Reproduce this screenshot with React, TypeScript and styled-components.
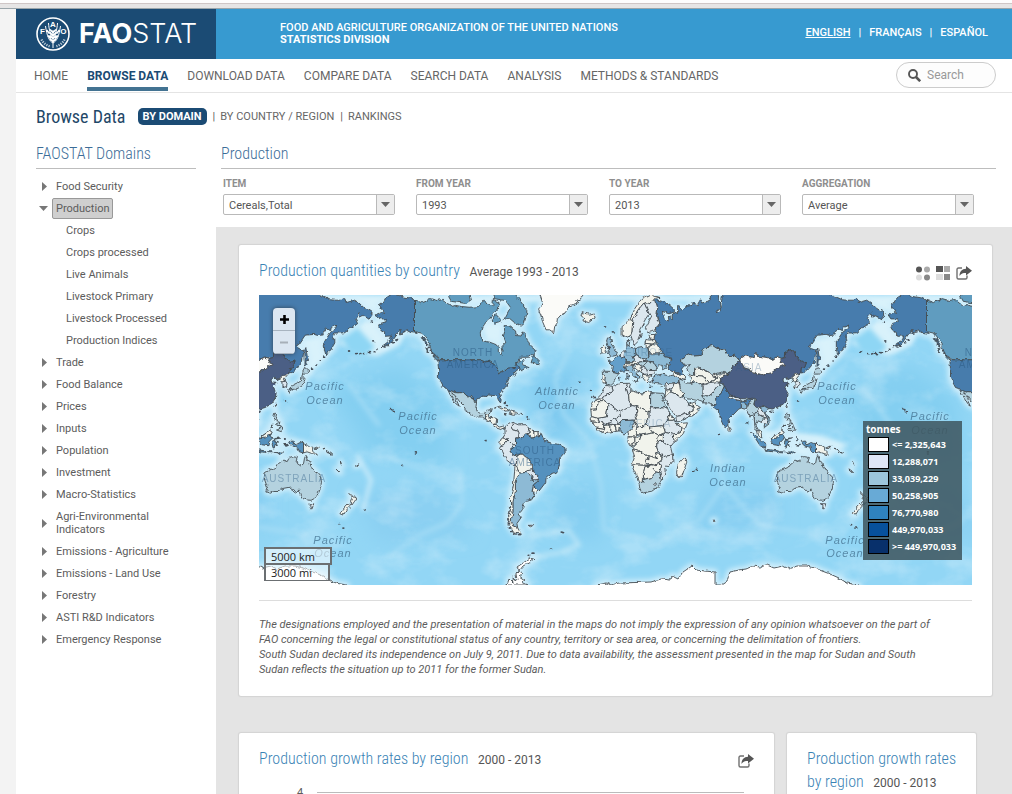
import React from 'react';
import styled, { createGlobalStyle } from 'styled-components';

const condensed = '"Roboto Condensed", "Liberation Sans Narrow", Roboto, sans-serif';
const sans = 'Roboto, "Liberation Sans", sans-serif';

const GlobalStyle = createGlobalStyle`
  * { box-sizing: border-box; }
  body { margin: 0; background: #f3f3f3; font-family: ${sans}; color: #5c5c5c; }
  ul { list-style: none; margin: 0; padding: 0; }
  a { color: inherit; text-decoration: none; }
  button, select, input { font-family: inherit; color: inherit; }
`;

/* ---------- page frame ---------- */

const WindowEdge = styled.div`
  height: 9px;
  border-top: 3px solid #fdfdfd;
  border-bottom: 1px solid #9aa5aa;
  background: #e6e5e5;
  box-shadow: inset 0 1px 0 #cfc6c6;
`;
const Page = styled.div`
  margin-left: 16px;
  background: #fff;
`;
const Header = styled.header`
  display: flex;
  height: 50px;
  background: #379ad0;
  color: #fff;
`;
const Brand = styled.a`
  display: flex;
  align-items: center;
  gap: 9px;
  width: 200px;
  padding-left: 20px;
  background: #1b4b74;
`;
const BrandName = styled.span`
  font: 300 27px/48px Inter, Roboto, sans-serif;
  color: #fff;
  b { font-weight: 700; }
`;
const Org = styled.p`
  flex: 1;
  margin: 0;
  padding: 13px 0 0 64px;
  font-size: 11px;
  line-height: 12px;
  font-weight: 500;
  b { display: block; font-weight: 700; }
`;
const Languages = styled.nav`
  display: flex;
  gap: 8px;
  padding: 17px 24px 0 0;
  font-size: 11px;
  line-height: 13px;
  font-weight: 500;
`;
const Language = styled.a<{ $current?: boolean }>`
  text-decoration: ${p => (p.$current ? 'underline' : 'none')};
`;

const MenuBar = styled.div`
  display: flex;
  justify-content: space-between;
  height: 34px;
  padding: 0 16px 0 18px;
  border-bottom: 1px solid #e4e4e4;
`;
const Menu = styled.nav`
  display: flex;
  gap: 19px;
`;
const MenuLink = styled.a<{ $active?: boolean }>`
  height: 32px;
  font-size: 12px;
  line-height: 34px;
  white-space: nowrap;
  color: ${p => (p.$active ? '#1b4b74' : '#666')};
  font-weight: ${p => (p.$active ? 700 : 400)};
  border-bottom: 4px solid ${p => (p.$active ? '#437392' : 'transparent')};
`;
const SearchBox = styled.label`
  display: flex;
  align-items: center;
  gap: 6px;
  width: 100px;
  height: 26px;
  margin-top: 3px;
  padding: 0 10px 0 11px;
  border: 1px solid #ccc;
  border-radius: 13px;
  background: #fdfdfd;
`;
const SearchInput = styled.input`
  width: 58px;
  padding: 0;
  border: 0;
  outline: 0;
  background: none;
  font-size: 12px;
  &::placeholder { color: #999; opacity: 1; }
`;

const SubHeader = styled.div`
  display: flex;
  align-items: center;
  height: 46px;
  padding-left: 20px;
  font-size: 11px;
`;
const PageTitle = styled.h1`
  margin: 0 12px 0 0;
  padding-top: 2px;
  font: 400 18px/24px ${condensed};
  color: #1f4868;
`;
const ViewLink = styled.a<{ $active?: boolean }>`
  padding: ${p => (p.$active ? '2px 5px' : '0')};
  margin-right: 6px;
  border-radius: 5px;
  line-height: 13px;
  background: ${p => (p.$active ? '#1b4b74' : 'transparent')};
  color: ${p => (p.$active ? '#fff' : '#666')};
  font-weight: ${p => (p.$active ? 700 : 400)};
`;
const Divider = styled.span`
  margin-right: 5px;
`;

const Columns = styled.div`
  display: flex;
`;
const Sidebar = styled.aside`
  flex: 0 0 200px;
  padding: 0 20px;
`;
const SectionTitle = styled.h2`
  height: 30px;
  margin: 0;
  border-bottom: 1px solid #bdbdbd;
  font: 300 16px/30px ${condensed};
  color: #3c6d98;
`;
const Main = styled.main`
  flex: 1;
  min-width: 0;
`;

/* ---------- domain tree ---------- */

const Tree = styled.ul`
  padding-top: 6px;
`;
const TreeRow = styled.li<{ $child?: boolean }>`
  display: flex;
  align-items: center;
  padding: 5px 0 4px ${p => (p.$child ? '30px' : '2px')};
  font-size: 11px;
  line-height: 13px;
`;
const Toggle = styled.button<{ $open: boolean }>`
  flex: 0 0 18px;
  display: flex;
  align-items: center;
  height: 13px;
  padding: 0 0 0 ${p => (p.$open ? '1px' : '4px')};
  border: 0;
  background: none;
  color: #777;
`;
const TreeLink = styled.a<{ $selected?: boolean }>`
  ${p =>
    p.$selected &&
    `margin: -4px 0 -4px -4px;
     padding: 3px;
     border: 1px solid #999;
     border-radius: 2px;
     background: #cfcfcf;`}
`;

/* ---------- filters ---------- */

const MainHead = styled.div`
  padding: 0 16px 0 5px;
`;
const Filters = styled.form`
  display: grid;
  grid-template-columns: repeat(4, 1fr);
  gap: 21px;
  height: 58px;
  padding: 8px 38px 0 7px;
`;
const Field = styled.label`
  display: block;
  font-size: 10px;
  line-height: 14px;
  font-weight: 700;
  color: #8e8e8e;
`;
const SelectFrame = styled.span`
  display: flex;
  height: 21px;
  margin-top: 3px;
  position: relative;
`;
const Select = styled.select`
  appearance: none;
  width: 100%;
  padding: 1px 24px 0 5px;
  border: 1px solid #b9b9b9;
  border-radius: 2px;
  background: #fff;
  font-size: 11px;
  color: #555;
`;
const SelectArrow = styled.span`
  position: absolute;
  right: 1px;
  top: 1px;
  bottom: 1px;
  width: 18px;
  display: grid;
  place-items: center;
  border-left: 1px solid #b9b9b9;
  background: #ededed;
  color: #666;
  pointer-events: none;
`;

/* ---------- cards ---------- */

const Board = styled.div`
  padding: 18px 20px 40px 23px;
  background: #e4e4e4;
`;
const Card = styled.section<{ $narrow?: boolean }>`
  padding: 12px ${p => (p.$narrow ? '12px' : '20px')} 0 20px;
  border-radius: 2px;
  background: #fff;
  box-shadow: 0 0 1px 1px #d3d3d3;
`;
const CardRow = styled.div`
  display: grid;
  grid-template-columns: minmax(0, 1fr) 189px;
  gap: 13px;
  margin-top: 37px;
  padding-right: 16px;
`;
const CardHead = styled.div`
  display: flex;
  justify-content: space-between;
  align-items: flex-start;
`;
const CardTitle = styled.h3`
  margin: 0;
  padding-top: 2px;
  font: 300 16px/23px ${condensed};
  color: #3a83b5;
`;
const Period = styled.span`
  margin-left: 6px;
  font: 400 12px/23px ${sans};
  color: #555;
  white-space: nowrap;
`;
const Tools = styled.div`
  display: flex;
  align-items: center;
  gap: 5px;
  height: 32px;
`;
const ToolButton = styled.button`
  display: block;
  padding: 0;
  border: 0;
  background: none;
  line-height: 0;
`;
const Disclaimer = styled.div`
  margin-top: 15px;
  padding: 16px 28px 19px 0;
  border-top: 1px solid #ddd;
  font-size: 11px;
  line-height: 15px;
  font-style: italic;
  p { margin: 0; }
`;

/* ---------- map furniture ---------- */

const MapFrame = styled.div`
  position: relative;
  margin-top: 6px;
  svg.world { display: block; width: 100%; height: auto; }
`;
const ZoomControl = styled.div`
  position: absolute;
  left: 14px;
  top: 13px;
  width: 22px;
  border-radius: 4px;
  overflow: hidden;
  background: #dbe6f1;
  box-shadow: 0 0 4px #345;
`;
const ZoomButton = styled.button<{ $off?: boolean }>`
  display: grid;
  place-items: center;
  width: 22px;
  height: 23px;
  padding: 0;
  border: 0;
  border-bottom: 1px solid #a8b4c0;
  background: none;
  color: ${p => (p.$off ? '#a7afb8' : '#000')};
`;
const ScaleBar = styled.div`
  position: absolute;
  left: 5px;
  bottom: 4px;
  color: #222;
`;
const ScaleLine = styled.div<{ $w: number; $top?: boolean }>`
  width: ${p => p.$w}px;
  height: ${p => (p.$top ? '16px' : '18px')};
  padding-left: 5px;
  border: 2px solid #6b6f72;
  border-top-width: ${p => (p.$top ? '0' : '2px')};
  border-bottom-width: ${p => (p.$top ? '1px' : '2px')};
  background: rgba(255, 255, 255, 0.55);
  font: 11px/15px "Open Sans", sans-serif;
`;
const Legend = styled.div`
  position: absolute;
  right: 10px;
  bottom: 25px;
  width: 99px;
  padding: 1px 3px 5px;
  background: rgba(63, 87, 96, 0.87);
  font: 700 9px/17px "Open Sans", sans-serif;
  color: #fff;
`;
const LegendTitle = styled.div`
  font: 700 10px/14px "Open Sans", sans-serif;
`;
const LegendRow = styled.li`
  display: flex;
  align-items: center;
  gap: 3px;
  height: 17px;
  padding-left: 2px;
  white-space: nowrap;
`;
const Swatch = styled.span<{ $c: string }>`
  width: 21px;
  height: 15px;
  border: 1px solid #000;
  background: ${p => p.$c};
`;
const ChartArea = styled.div`
  display: flex;
  height: 200px;
  padding: 10px 10px 0 38px;
  gap: 14px;
  font-size: 11px;
  line-height: 12px;
`;
const GridLine = styled.span`
  flex: 1;
  margin-top: 5px;
  border-top: 1px solid #bbb;
`;

/* ---------- world map ---------- */

// Web Mercator at zoom 1: 512px for the whole globe.
const WORLD = 512;
const K = WORLD / (2 * Math.PI);
const px = (lon: number) => 356 + (lon * WORLD) / 360;
const py = (lat: number) => 145 - K * Math.log(Math.tan(Math.PI / 4 + (lat * Math.PI) / 360));

const outline = (pts: string) =>
  'M' +
  pts
    .trim()
    .split(/\s+/)
    .map(p => {
      const [lon, lat] = p.split(',').map(Number);
      return `${px(lon).toFixed(1)} ${py(lat).toFixed(1)}`;
    })
    .join('L') +
  'Z';

const C = {
  russia: '#467cad',
  usa: '#467cac',
  china: '#4b5f85',
  india: '#4a80b3',
  canada: '#609cbf',
  brazil: '#5591be',
  france: '#649fca',
  mid: '#8dbad5',
  soft: '#b4d2df',
  pale: '#dce7ee',
  cream: '#f1f3ec',
  white: '#fbfbf8',
};

const countries: [string, string][] = [
  [C.russia, '28,70 31,69.5 36,69 41,67.5 41,66.4 38,66 33,66.7 35,64.3 38,63.9 37.5,65.1 40.5,64.6 40,65.6 42,66.5 44,66.1 44,68.3 46,68 46,66.8 48,67.6 54,68.4 54,69 58,68.5 60,69.7 61,68.9 65,69.3 67,69.7 67,71 68,73 73,73 72.5,71 74,68 71,66.3 74,66.8 76,72 128,72 130,71 133,71.6 140,72.5 150,71.3 152,70.9 160,69.7 163,69.6 168,69.6 170,70 171,69 177,69.6 180,68.9 184,67.5 188,66.6 190,66.1 187,64.4 183,65.5 180.5,65 180,66.3 178.7,65.6 177.5,64.6 179,63 177,62.5 174,61.7 170,60 166,59.9 163,59.9 161.5,58 163,57.5 163,56.2 161.8,55 160,53.2 158.5,52.8 156.8,51 155.7,53.5 155.6,56.5 157,57.8 159.8,60 163.5,61.5 164.3,62.6 160.5,61.8 160,60.7 156.7,61.5 154.3,59.7 155,59.2 151,59 148.5,59.4 142.2,59.1 137.5,55.5 135.2,54.8 138,53.9 141.2,53.2 140.6,50 140.3,48.3 138.2,46.3 135.3,43.9 133,42.8 131,42.6 130.6,42.4 131,44.8 133.2,45.1 135,48.4 131,47.7 130.5,48.9 127.5,49.8 126,52.8 123.5,53.5 120,52.6 119.8,50 117,49.7 114,50.2 110,49.2 107,50 102.2,50.5 98.5,52 98,50 94,50.4 92,50.8 87.7,49.2 83.5,51 80,50.8 77,53.4 74,53.6 71,54.2 68.5,55.2 65,54.4 61,53.9 61.5,51 58.5,51 55,50.7 51.5,51.6 48.5,50.4 46.9,49 47,48 49,46.3 48,45.5 47,44.8 47.6,43 48.5,41.8 46.5,41.9 44,42.6 40,43.5 37.4,44.8 37.7,46.7 39,47.2 38.2,47.8 40,48.8 39.7,49.8 35.5,50.4 34,52 31.5,53.2 32,54 30.8,54.9 28.2,56.2 27.5,57.5 28,59.4 30,60 28,60.6 31.5,62.9 29.5,66 30,67.7 28.5,68.2'],
  [C.russia, '142.5,54.3 143.5,50.5 144.5,49 143,49.2 142.6,47.5 143.5,46.7 142,46 142,50 141.8,53'],
  [C.usa, '-141,69.6 -141,60.3 -139,59.8 -143.5,60 -147,61 -149.5,59.8 -151.5,59.2 -150.5,61.2 -154,59.2 -158.3,56 -163,54.8 -164.5,54.6 -161,56 -157.7,57.6 -157,58.8 -162,58.7 -162,60 -164.5,60.7 -166,61.7 -164.8,63.1 -161,63.6 -161,64.5 -166,64.5 -168,65.7 -164,66.4 -162,66.1 -163.7,67.1 -166.3,68.3 -163,69.1 -161,70.3 -156.5,71.3 -150,70.5 -143.5,70.1'],
  [C.canada, '-141,69.6 -136,69 -133,69.4 -130,70 -125,69.5 -121,69.8 -115,68 -112,68.3 -108,68 -102,67.8 -96,68 -94,69 -92,69.6 -90,68.6 -86,68 -85.5,69.8 -81.5,69 -82,67.5 -86,66.3 -88,64.5 -90.5,63.6 -93.5,61.8 -94.7,60 -94.5,58.7 -92.5,57 -88,56.5 -82.3,55.2 -82,53 -79.5,51.3 -78.7,52.5 -79.5,54.7 -76.7,56.5 -78.5,58.8 -77.5,60.5 -78,62.4 -74,62.3 -70,61 -69.5,59 -66,58.8 -64.5,60.3 -62,57.8 -60,55.2 -56.5,53.5 -55.8,52.3 -60,50.2 -66.5,50.2 -70,47.3 -65,49.2 -64.5,48 -65,46.3 -61,45.5 -65.5,43.6 -67,45 -69,47.4 -71,45.3 -75,45 -79,43.4 -82.5,42 -82.5,45.3 -84.5,46.5 -88.5,48.3 -91.5,48.1 -95,49 -123,49 -124.5,50 -127.5,51 -130,54.5 -130,56 -133.5,58.5 -135.5,59.8 -139,60.2 -141,60.3'],
  [C.canada, '-59,47.7 -57,51.3 -55.8,49.8 -53,48 -53.5,46.7 -56,47'],
  [C.canada, '-62,66 -64,63 -66,62.2 -71,63.5 -74,64.6 -78,64.4 -73.5,67.8 -77,69.5 -85,70 -85,72 -74,72 -68,70 -62,67.2'],
  [C.canada, '-105,68.8 -115,69.3 -117,70.5 -112,72 -103,72 -101,69.7'],
  [C.canada, '-80,63.8 -85,63.2 -87,64 -84,66 -81,64.6'],
  [C.canada, '-124,48.5 -125.5,48.9 -128,50.6 -125.5,50.2'],
  [C.canada, '-131.8,52.2 -133,53.9 -131.8,54'],
  [C.usa, '-132,54.9 -133.2,55.8 -134,57 -136.3,58.2 -134.6,58.2 -133.5,57.2 -131.5,55.6'],
  [C.usa, '-152.5,57.7 -154.5,57.3 -153.6,56.9'],
  [C.usa, '-123,49 -95,49 -91.5,48 -88.5,48.3 -84.5,46.5 -82.5,45.3 -82.5,42 -79,43.2 -75,45 -71,45.3 -69,47.4 -67,45 -70.5,43 -70,41.7 -74,40.6 -76,37 -75.5,35.3 -79,33.5 -81.3,31 -80,27 -80.5,25.2 -82,27 -83,29.5 -85,29.8 -89.5,30.2 -90,29.2 -94,29.6 -97.3,27.5 -97.3,25.9 -99.3,26.8 -101.5,29.7 -103,29 -104.8,30 -106.5,31.7 -111,31.4 -114.8,32.5 -117.1,32.5 -118.5,34 -120.6,34.6 -122.5,37.5 -124.2,40.3 -124,44 -124.5,48.3'],
  [C.soft, '-117.1,32.5 -114.8,32.5 -111,31.4 -106.5,31.7 -104.8,30 -103,29 -101.5,29.7 -99.3,26.8 -97.3,25.9 -97.8,22.3 -96.2,19.2 -94.4,18.2 -91.5,18.5 -90.4,21 -87,21.5 -88,18.4 -91,17.5 -90.5,16 -92.2,14.6 -94,16.1 -97,15.9 -101.5,17.7 -105.5,20.4 -105.5,22.5 -109,25.8 -112.5,29.8 -114.7,31.7 -112,28 -109.5,23.1 -112,24.8 -114,28 -116,30.3'],
  [C.cream, '-92.2,14.6 -90.5,16 -91,17.5 -88,18.4 -88.5,15.9 -87.5,12.9'],
  [C.cream, '-88.5,15.9 -83.2,15 -83.7,11 -85.8,11 -87.5,12.9'],
  [C.cream, '-83.7,11 -81.5,9 -79,9.5 -77.4,8.5 -80,7.3 -83,8.3 -85.8,10.2'],
  [C.cream, '-84.8,21.9 -81,23.1 -77,21.7 -74.2,20.2 -77.5,19.9 -78,20.7 -82,22.4'],
  [C.cream, '-74.4,18.5 -73,19.9 -69,19 -68.5,18.2 -71.5,17.8'],
  [C.cream, '-78,18.4 -76.3,18.2 -77.2,17.8'],
  [C.cream, '-67,18.4 -65.7,18.4 -66,18'],
  [C.pale, '-77.4,8.5 -75,10.8 -71.5,12.3 -73,9.2 -72,7.2 -67.5,6.2 -67.2,1.5 -69.8,1.5 -70,-4.2 -73,-2.3 -75.3,0 -78.8,1.5 -77.3,4'],
  [C.pale, '-71.5,12.3 -70,11.5 -68,10.6 -62,10.7 -60,8.3 -61,6 -60.5,4.7 -64,4 -65.5,.8 -67.2,1.5 -67.5,6.2 -72,7.2 -73,9.2'],
  [C.cream, '-60,8.3 -57,6 -57,2 -58.8,1.2 -60.5,4.7'],
  [C.cream, '-57,6 -54,5.9 -54,2.3 -57,2'],
  [C.cream, '-54,5.9 -51.7,4.2 -54,2.3'],
  [C.cream, '-78.8,1.5 -75.3,0 -78,-3 -80.2,-4.3 -81,-2 -80,.8'],
  [C.pale, '-80.2,-4.3 -78,-3 -75.3,0 -73,-2.3 -70,-4.2 -74,-7.5 -72.5,-9.5 -70.5,-11 -69,-12.5 -69,-16 -70.3,-18.3 -76.2,-14 -79,-8 -81.2,-6'],
  [C.brazil, '-70,-4.2 -69.8,1.5 -67.2,1.5 -65.5,.8 -64,4 -60.5,4.7 -58.8,1.2 -54,2.3 -51.7,4.2 -50,0 -44,-2.5 -40,-2.9 -35.2,-5.5 -35,-9 -39,-13.5 -39.3,-18 -41,-22 -45,-23.4 -48.5,-26 -48.7,-28.5 -53.4,-33.7 -57.6,-30.2 -53.7,-27.1 -54.6,-25.5 -54.3,-24.2 -57.8,-22.1 -58,-17 -60,-16.3 -60,-13.7 -65.3,-9.8 -70.5,-11 -72.5,-9.5 -74,-7.5'],
  [C.cream, '-69,-11 -65.3,-9.8 -60,-13.7 -60,-16.3 -58,-17 -57.8,-20 -62,-20.5 -62.6,-22.2 -67.5,-22.8 -69.5,-17.5 -69,-12.5'],
  [C.pale, '-62.6,-22.2 -62,-20.5 -58.2,-19.8 -57.8,-22.1 -54.3,-24.2 -54.7,-26.8 -58.5,-27.3 -57.7,-25.2'],
  [C.cream, '-57.6,-30.2 -53.4,-33.7 -55,-34.9 -58.2,-34'],
  [C.mid, '-67.5,-22.8 -62.6,-22.2 -57.7,-25.2 -58.5,-27.3 -54.7,-26.8 -53.7,-27.1 -57.6,-30.2 -58.3,-34 -57,-36.3 -58,-38.3 -62.2,-39 -65,-41 -63.8,-42.5 -67.5,-46 -65.8,-47.6 -69,-50.5 -68.4,-52.4 -72,-51.5 -73,-49 -71.8,-45 -71.8,-40 -70,-34 -70,-29 -68.5,-25'],
  [C.cream, '-70.3,-18.3 -69.5,-17.5 -67.5,-22.8 -68.5,-25 -70,-29 -70,-34 -71.8,-40 -71.8,-45 -73,-49 -72,-51.5 -68.4,-52.4 -66,-55 -71,-54.5 -75,-51 -75.5,-47 -73.5,-42 -73.5,-37 -71.5,-31'],
  [C.white, '-43,60 -46,61 -48.5,61 -51,63.7 -52,65.4 -53.7,67 -51,69 -54,72 -22,72 -23,70.3 -27,69.5 -25.5,69 -32,68.2 -35,66.3 -38,65.7 -40.5,64.5 -41,63 -42.5,62'],
  [C.cream, '-24,65.5 -22,64.8 -22.5,63.9 -18.5,63.4 -14,64.8 -15,66.2 -18,65.9 -20,66 -23,66.4'],
  [C.mid, '-5.5,50.1 1,51 1.6,52.8 0,53.3 -1.5,54.9 -3,56 -2,57.5 -4,57.7 -3,58.6 -5,58.6 -6,56.8 -5,55 -3,54 -4.7,53.2 -5,51.8 -3,51.3'],
  [C.cream, '-10,52 -6.3,52.2 -6,54.5 -8,55.2 -10,54'],
  [C.cream, '5,59 5,62 8,63.5 10,64 12,65.5 14,67.5 16,68.6 19,70 25,71 31,70.3 28,70 25,68.7 20.5,69 16,67 12.5,64 12,60.5 11,59 7.5,58.1'],
  [C.pale, '11,59 12,60.5 12.5,64 16,67 20.5,69 24,66 21.5,64.5 17.3,61 18.5,59.8 16.5,57 14,55.5 13,55.5'],
  [C.pale, '20.5,69 25,68.7 28,70 30,67.7 29.5,66 31.5,62.9 28,60.6 23,60 21.4,61.5 25.3,65 24,66'],
  [C.soft, '8.2,55 8.2,57 10.5,57.6 10,55'],
  [C.cream, '24,59.3 28,59.4 27.5,57.5 24.3,57.7'],
  [C.cream, '24.3,57.3 27.5,57.5 28.2,56.2 26,55.7 21.1,56 21.7,57.5'],
  [C.cream, '21.1,56 26,55.7 23.5,54 21,55.2'],
  [C.cream, '23.5,54 26,55.7 30.8,54.9 32,54 31.5,53.2 31,51.6 23.6,51.6'],
  [C.mid, '14.3,53.9 19,54.4 23,54.3 23.6,51.6 24,50.5 22.5,49.2 18.5,49.6 14.8,51'],
  [C.mid, '7,53.5 9,54.8 14.3,53.9 14.8,51 12.2,50.3 13.5,48.7 12.9,47.6 7.6,47.6 8.2,49 6.2,49.7'],
  [C.pale, '2.5,51 7,53.5 6.2,49.7'],
  [C.france, '-1.8,43.4 -1.2,46 -4.7,48.3 -1.5,48.7 2.5,51 6.2,49.7 8.2,49 7.6,47.6 6.2,46.3 7.6,43.8 4,43.4 3.1,42.5'],
  [C.soft, '-9,43.5 -1.8,43.4 3.1,42.5 0,40 -.5,38 -2.2,36.8 -5.5,36.1 -7.3,37.2 -7,41.8 -8.8,42'],
  [C.cream, '-8.8,42 -6.7,41.8 -7.3,37.2 -9,37.1 -9.4,38.8'],
  [C.mid, '7.6,43.8 6.9,45.2 10.5,46.7 13.6,46.4 12.4,44.5 16,41.5 18.4,40 16.6,39.8 16,38 15.5,40 12.3,41.8 10.3,43.8'],
  [C.mid, '12.5,38 15.5,38.2 15,36.8'],
  [C.mid, '8.3,39 8.4,41 9.7,41 9.5,39.2'],
  [C.cream, '6.2,46.3 7.6,47.6 12.9,47.6 13.5,48.7 17,48.4 16.2,46.9 10.5,46.7 6.9,45.9'],
  [C.pale, '12.2,50.3 14.8,51 18.5,49.6 22.5,49.2 22,48.3 17,48 13.5,48.7'],
  [C.soft, '16.2,46.9 17,48 22,48.3 22.8,47.8 20.3,46.1 17,45.8'],
  [C.cream, '13.6,45.5 16.2,46.9 17,45.8 19,45.2 19.2,42.6 15,44.5'],
  [C.pale, '19,45.2 20.3,46.1 22.5,44.5 22.9,42 19.5,41.9'],
  [C.soft, '20.3,46.1 22.8,47.8 26.5,48.2 28.2,46.5 29.7,45 28.5,43.8 22.6,43.9'],
  [C.pale, '22.6,43.9 28.5,43.8 28,42 22.9,41.5'],
  [C.cream, '19.5,41.9 22.9,41.5 26.3,41.5 24,40.3 22.7,39 24,37.8 22.5,36.6 21,38.5 19.3,40.5'],
  [C.mid, '22.5,49.2 24,50.5 23.6,51.6 31,51.6 34,52 35.5,50.4 39.7,49.8 38.2,47.3 35,46.4 36.5,45.3 33.8,44.4 32.8,46 30.7,46.3 29.7,45.3 28.2,46.5 26.5,48.2 22,48.3'],
  [C.mid, '26.3,40.2 29,41.2 33,42 38,41 41.5,41.5 44.8,39.7 44.5,37.2 36.5,36.8 36,36 31,36.7 27.5,36.8'],
  [C.cream, '40,43.5 46.5,41.9 48.5,41.8 50,40.4 48.8,38.4 46.5,39 44.8,39.7 41.5,41.5'],
  [C.soft, '46.9,49 48.5,50.4 51.5,51.6 55,50.7 61.5,51 61,53.9 65,54.4 68.5,55.2 71,54.2 74,53.6 77,53.4 80,50.8 83.5,51 87.7,49.2 85.5,47.2 82.5,45.5 80.2,42.3 75,43 70.5,42 68,41.2 66,43 61,44.5 58.5,45.5 56,45 56,41.3 52.5,42 50.3,44.5 53,46.8 49,46.3 47,48'],
  [C.cream, '56,41.3 56,45 58.5,45.5 61,44.5 66,43 68,41.2 73,40.5 68,38.5 66.5,37.4 61.5,41'],
  [C.cream, '53.8,37 52.5,42 56,41.3 61.5,41 66.5,37.4 61.2,35.7 57,38.1'],
  [C.cream, '68,41.2 70.5,42 80.2,42.3 74,39.5 73,40.3'],
  [C.cream, '68,38.5 73,40.3 74,39.5 74.9,37.3 67.8,37.2'],
  [C.pale, '61.2,35.7 66.5,37.4 71.5,37.9 74.9,37.3 71,34 69.5,31.8 66,29.6 61,29.6'],
  [C.soft, '61,29.6 66,29.6 69.5,31.8 71,34 74.9,37 77,35.5 74.5,31 70,28 71,24.3 67.3,24 66.5,25.3 61.6,25.2 63,27.2'],
  [C.soft, '44.8,39.7 46.5,39 48.8,38.4 50,37.4 53.8,37 57,38.1 61.2,35.7 61,29.6 63,27.2 61.6,25.2 57,26.9 51.5,27.8 48.5,30 46,33 45.5,36'],
  [C.cream, '42.3,37.2 44.8,37.2 45.5,36 46,33 48.5,30 46.5,29.1 39.2,32 41,34.4'],
  [C.pale, '36,36.8 42.3,37.2 41,34.4 38.8,33.3 35.7,33'],
  [C.cream, '35.7,33 38.8,33.3 39.2,32 36,29.2 35,29.5'],
  [C.pale, '35,29.5 36,29.2 39.2,32 46.5,29.1 48.4,28.5 50,26.5 51.5,24.5 55,22.7 55,20 52,19 47,17 42.8,16.4 39,21.3 35,28'],
  [C.pale, '42.8,16.4 47,17 52,19 53,16.6 45,12.8 43.4,12.7'],
  [C.cream, '51.5,24.2 56,26 57,24 59.8,22.4 57.7,19 55,17 53,16.6 52,19 55,20 55,22.7'],
  [C.india, '77,35.5 79,32.5 81,30.2 80.2,28.8 84,27.4 88,26.5 92,26.9 97,28.2 95,26 93.3,24 92.3,22.5 91.5,24.5 89,26 88.8,22 87,21.2 82.3,16.6 80.2,15 80,12 78,8.2 76.5,9.5 74.7,13.5 72.8,19 72.7,21 70.5,20.8 69,22.3 71,24.3 70,28 74.5,31'],
  [C.pale, '80.2,28.8 81,30.2 88,27.9 88,26.5 84,27.4'],
  [C.mid, '88.5,26 92,25 92,21 89,21.8'],
  [C.cream, '80,9.7 81.8,7.5 80.2,6'],
  [C.china, '74,39.5 80.2,42.3 82.5,45.5 85.5,47.2 87.7,49.2 91,45.2 95.5,44.2 96.4,42.7 105,41.6 110,42.7 112,43.7 115.5,45.5 119.8,46.7 116,48 117,49.7 119.8,50 120,52.6 123.5,53.5 126,52.8 127.5,49.8 130.5,48.9 131,47.7 135,48.4 133.2,45.1 131,44.8 130.6,42.4 126.8,41.7 124.3,40 121.5,39 121,40.8 118,39 119,37.3 122.5,37 119.3,34.9 121.8,31.5 121,28 118.5,24.6 114,22.3 110.5,21.3 108,21.6 105,23.2 102,22.4 99.5,22.9 97.6,24.5 98.5,27.6 97,28.2 92,27.8 88,27.9 81,30.2 79,32.5 77,35.5 74.9,37.3'],
  [C.china, '108.8,19.8 110.7,20 110,18.4'],
  [C.white, '87.7,49.2 92,50.8 94,50.4 98,50 98.5,52 102.2,50.5 107,50 110,49.2 114,50.2 117,49.7 116,48 119.8,46.7 115.5,45.5 112,43.7 110,42.7 105,41.6 96.4,42.7 95.5,44.2 91,45.2'],
  [C.cream, '124.3,40 126.8,41.7 130.6,42.4 127.5,39.5 128.3,38.3 126.6,37.7 125,38'],
  [C.pale, '126.6,37.7 128.3,38.3 129.4,37 129,35.2 126.4,34.5'],
  [C.soft, '131,34 133,35.5 136.7,37 139.5,38.5 140,41.3 142,39.5 140.8,36 138.5,34.7 135.5,33.6'],
  [C.soft, '140,42 141.7,45.4 145.3,43.4 143,42'],
  [C.soft, '130,33.5 132,33.3 131,31.2 130,32'],
  [C.cream, '120.2,23 121.5,25.2 120.8,22'],
  [C.soft, '92.3,21 94.5,25 97,28 98.5,27.6 97.6,24.5 99.5,22.9 101,21.5 97.7,18.5 98.8,13 98.5,10 97.5,16.5 94.5,16'],
  [C.soft, '97.7,18.5 100,20.3 101,17.7 105.5,15.5 102.5,12.5 100.8,13.4 99.3,10 101,6.7 100,6.6 98.4,8 98.8,13'],
  [C.pale, '100,20.3 101,21.5 102,22.4 105,19 107.5,14.5 105.5,15.5 101,17.7'],
  [C.pale, '102.5,12.5 105.5,15.5 107.5,14.5 107,11.5 105,10.5'],
  [C.mid, '102,22.4 105,23.2 108,21.6 105.8,19 109,14 109,11.7 105,8.7 105,10.5 107,11.5 107.5,14.5 105,19'],
  [C.cream, '100.2,6.5 102,6.2 103.5,1.5 101,3'],
  [C.brazil, '95.3,5.5 98,4 103.5,-1 106,-3 105.8,-5.8 102,-4 98.5,1.5'],
  [C.brazil, '105.2,-6.8 108.5,-6.7 114.3,-7.7 114,-8.7 108,-7.8'],
  [C.brazil, '109,1.5 111.5,2.5 115,5 117,7 119,5.2 117.7,3 118.8,1 116.5,-1.5 116,-4 111.5,-3.3 110,-1.5'],
  [C.cream, '109,1.5 111.5,2.5 115,5 117,7 119,5.2 117.7,4 115.5,3.5 114.5,1.5 111,1'],
  [C.brazil, '120,1 125,1.5 120.5,0.5 121,-1 123.3,-1 121.7,-2 122.8,-4.5 121,-3 120.4,-5.6 119.5,-5.5 119,-3'],
  [C.brazil, '131,-1 134,-.8 135,-3.3 138,-1.7 141,-2.6 141,-9 138,-8.3 137,-5 133,-4 132,-2.8'],
  [C.cream, '141,-2.6 145,-4.3 147.8,-6.1 147,-6.8 150.8,-10.5 147,-9.5 143.5,-8.3 141,-9'],
  [C.brazil, '115.5,-8.2 119,-8.3 118.5,-9 115.5,-8.8'],
  [C.brazil, '120,-8.4 127,-8.4 124,-10.2 123,-9'],
  [C.brazil, '127.5,1.8 128.7,.5 127.8,-.8'],
  [C.brazil, '127,-3.2 130.5,-3 129,-3.7'],
  [C.soft, '120,16 120.7,18.5 122,18.3 121.7,16 124,13 120.7,13.8'],
  [C.soft, '122,7 125.5,9.7 126.5,7.5 125.4,5.8'],
  [C.soft, '122,11.5 125,12.4 124.5,10.2 122.5,10'],
  [C.soft, '117.3,8.5 119.4,11.3 119,10'],
  [C.cream, '148.5,-5.8 152,-4.2 151,-6'],
  [C.cream, '154.8,-5.6 156,-6.8 155.2,-6.5'],
  [C.cream, '157,-7.3 160.8,-9.8 158,-8.5'],
  [C.cream, '164,-20.2 167,-22.3 166,-22'],
  [C.cream, '167,-15 168,-17.5 167.2,-16.5'],
  [C.cream, '177.4,-18 179.8,-16.5 178.5,-18'],
  [C.soft, '113.5,-26.5 114,-22.5 117,-20.7 121.5,-19 123,-16.8 126.5,-14 129.5,-15 131,-12.2 133,-11.6 136.7,-12.2 135.7,-15 139.5,-17.6 141,-16.5 141.7,-12.7 142.6,-10.8 143.8,-14.3 145.5,-15.5 146.2,-19 149,-20.5 151,-23.6 153,-25.2 153.6,-28.5 152.7,-32 150,-37.4 146.3,-39 143.5,-38.8 140.5,-38 138.5,-35.5 137.8,-33 136,-34.8 134,-32.8 131.2,-31.5 126,-32.3 123.7,-34 120,-34 117.7,-35 115,-34.2 115.7,-32'],
  [C.pale, '144.8,-40.8 148.2,-40.9 147,-43.5 146,-43.4'],
  [C.cream, '172.8,-34.5 175.5,-36.7 178.4,-37.8 177,-39.5 175,-41.5 174,-39.4 174.8,-38'],
  [C.cream, '172.7,-40.6 174.2,-41.8 171,-44.3 169,-46.6 166.6,-46 168.5,-44'],
  [C.pale, '-6,35.8 -2,35.1 -1.2,32.3 -8.7,28.7 -8.7,27.6 -13,27.7 -9.7,30.5 -8.5,33.3'],
  [C.cream, '-13,27.7 -8.7,27.6 -8.7,26 -12,26 -12,23.5 -13,21.3 -17,21 -16,24'],
  [C.pale, '-2,35.1 3,36.9 8.6,37 8,34 9.5,30.2 9.9,26.5 12,23.5 5.5,19.5 3.2,19.1 -4.8,25 -8.7,27.5 -8.7,28.7 -1.2,32.3'],
  [C.pale, '8.6,37 11,37 10,34.3 11.5,33.2 9.5,30.2 8,34'],
  [C.cream, '11.5,33.2 15.2,32.3 16,31.2 20,30.8 22,32.9 25,31.6 25,20 24,19.5 15,23 12,23.5 9.9,26.5 9.5,30.2'],
  [C.soft, '25,31.6 32.3,31.2 34.3,31.3 34.8,29.5 34,28 32.6,29.9 35.5,24 36.9,22 25,22'],
  [C.cream, '-17,21 -13,21.3 -12,23.5 -12,26 -8.7,26 -8.7,27.4 -4.8,25 -6,16 -12,15 -16.5,16.2'],
  [C.pale, '-4.8,25 3.2,19.1 4,16.3 -1,15 -5,10.5 -11,12.3 -12,15 -6,16'],
  [C.pale, '3.2,19.1 12,23.5 15,23 15.5,17 13.5,13.8 4,13.5 2,12 .2,15 4,16.3'],
  [C.cream, '15,23 24,19.5 24,15.7 22,11 15,7.8 15.5,10 13.5,13.8 15.5,17'],
  [C.pale, '25,22 36.9,22 38.5,18 36.5,14.5 34,9.5 33,10 24,9 22,11 24,15.7 24,20'],
  [C.cream, '24,9 33,10 34,9.5 35.5,5.3 30.8,3.5 27.5,5'],
  [C.pale, '36.5,14.5 40,14.5 42.5,11.5 48,8 45,5 41,4 35.5,5.3 34,9.5'],
  [C.cream, '36.5,14.5 38.5,18 43,12.5 40,14.5'],
  [C.cream, '43,11.3 51,12 48,4.5 41.5,-1.7 41,4 45,5 48,8'],
  [C.cream, '-16.5,16.2 -12,15 -11,12.3 -16.8,12.5 -17.5,14.7'],
  [C.cream, '-16.8,12.5 -11,12.3 -8,12 -8,8 -13,9'],
  [C.cream, '-13,9 -8,8 -7.5,4.4 -11.5,6.8'],
  [C.cream, '-8,10 -5,10.5 -2.8,9.8 -3,5.1 -7.5,4.4 -8,8'],
  [C.cream, '-2.8,11 0,11 1,6.1 -3,5.1'],
  [C.cream, '0,11 3.5,11.7 2.7,6.3 1,6.1'],
  [C.pale, '-5,10.5 -1,15 2,12 1,11 -2.8,11'],
  [C.mid, '2.7,6.3 3.5,11.7 4,13.5 13.5,13.8 12,8 9,5 6,4.3 4.5,6.3'],
  [C.cream, '9,5 12,8 13.5,11 14.5,12.5 15.5,10 15,4 16,2 10,2.2'],
  [C.cream, '15,4 15,7.8 22,11 27.5,5 18.5,3.5'],
  [C.cream, '10,2.2 14,2 14,-2 11,-4 9,-1'],
  [C.cream, '14,2 16,2 18.5,3.5 17,-1 12,-5 11,-4 14,-2'],
  [C.cream, '18.5,3.5 27.5,5 30.8,3.5 29.5,-1 29.3,-5 30.5,-8.3 28.5,-9 29.5,-13 22,-11 17,-8 12.3,-5.8 17,-1'],
  [C.cream, '30.8,3.5 34,4 34,-1 29.5,-1'],
  [C.pale, '35.5,5.3 41,4 41.5,-1.7 39,-4.7 34,-1 34,4'],
  [C.pale, '29.5,-1 34,-1 39,-4.7 40.4,-10.4 34.5,-11.5 30.5,-8.3 29.3,-5'],
  [C.cream, '12.3,-5.8 17,-8 22,-11 24,-11 24,-13 22,-13 22,-16.2 23.3,-17.6 11.8,-17.2 13.7,-12'],
  [C.cream, '24,-11 29.5,-13 28.5,-9 33,-9.5 33,-14 27,-18 22,-16.2 22,-13 24,-13'],
  [C.pale, '33,-9.5 34.5,-11.5 40.4,-10.4 40.7,-15 35,-19.8 35.5,-24 32.8,-26.8 31.3,-22.4 33,-17 30.3,-15.8 33,-14'],
  [C.cream, '27,-18 30.3,-15.8 33,-17 31.3,-22.4 29,-22 25.3,-17.8'],
  [C.cream, '20,-22 21,-18.3 25.3,-17.8 29,-22 25.5,-25.6 20,-26.8'],
  [C.cream, '11.8,-17.2 23.3,-17.6 25,-17.8 21,-18.3 20,-22 20,-28.4 16.5,-28.6 14.4,-22.5'],
  [C.soft, '16.5,-28.6 20,-28.4 20,-26.8 25.5,-25.6 29,-22 31.3,-22.4 32.8,-26.8 30.5,-31 26,-33.8 20,-34.8 18.3,-34'],
  [C.pale, '27,-29.5 28.5,-28.7 29.2,-29.7 28,-30.5'],
  [C.cream, '49.3,-12 50.4,-15.5 47,-25 44,-25 43.3,-22 44.5,-16.5'],
  [C.white, '-61,-51.3 -58,-51.3 -59,-52.2'],
  [C.white, '68.7,-49 70.3,-49 69.5,-49.7'],
  [C.mid, '132.5,34 134.6,34.2 133,32.9'],
];

// Scattered islands, as lon,lat pairs.
const islets: [number, number][] = [
  [-155.5, 19.5], [-156.5, 20.8], [-158, 21.5], [-149.5, -17.6], [-140, -9], [-170, 57], [-173, 52.2], [-176.5, 51.8],
  [-167, 53.6], [-169, 53], [173, 52.9], [178, 51.8], [-179, 51.8], [147, 44.5], [150, 46.5], [153, 48.5], [155.5, 50.2],
  [-171, 63.5], [-36.5, -54.4], [-37.5, -54.2], [-45, -60.6], [-58, -62], [-60, -62.7], [57.5, -20.3], [55.5, -21.1],
  [-25, 37.7], [-16, 28.2], [-14, 28.6], [-17, 32.7], [3, 39.6], [33, 35], [9, 42.2], [24.8, 35.2], [-7, 62], [-1.5, 60.3],
  [-4, 54], [-61, 14.5], [-61.5, 16], [-77.5, 25], [-76, 23.5], [-91, -.5], [169, -52.5], [-176, -44], [166, -50.6],
  [-128.5, 52], [-129.5, 53.2], [-131, 54.4], [-126.5, 51], [-133, 55.7], [-134.5, 57], [-135, 58], [-153.5, 57.4],
  [-150, 59.6], [-148, 60.3], [-156, 56.3], [-160, 55.2], [-162, 54.6], [-74.5, -50.5], [-75, -48.5], [-74.5, -49.5],
  [-75, -47], [-74, -52.5], [-73, -53.5], [-71, -55], [-69.5, -54.9], [-67.5, -55.2], [-74, -44.5], [-74, -45.8],
  [-73.8, -42.6], [73, 4], [80, 13], [93, 12], [128, 26.5], [16, 43.3], [25.5, 37.2], [26.5, 38.5],
];

const polar =
  'M330 300L338 290L348 288L352 290L360 288L392 287L402 284L411 285L413 281L419 284L424 277L433 271L437 275L446 276L456 277L456 290L462 290L468 286L471 277L480 275L487 274L494 271L501 272L508 270L515 273L524 271L530 274L538 271L548 271L556 273L563 276L571 279L580 283L588 288L600 290L600 300Z';
const peninsula =
  'M248 290L250 284L254 288L253 282L258 285L257 279L260 276L258 272L264 268L270 264L276 263L271 267L264 271L261 275L263 279L260 281L266 285L263 287L269 290Z';

// x, y, text, opacity; the oceans are set in italics.
const seaLabels: [number, number, string][] = [
  [66, 95, 'Pacific'], [66, 109, 'Ocean'],
  [159, 125, 'Pacific'], [159, 139, 'Ocean'],
  [298, 100, 'Atlantic'], [298, 114, 'Ocean'],
  [469, 177, 'Indian'], [469, 191, 'Ocean'],
  [578, 95, 'Pacific'], [578, 109, 'Ocean'],
  [671, 125, 'Pacific'], [671, 139, 'Ocean'],
  [74, 249, 'Pacific'], [74, 262, 'Ocean'],
  [586, 249, 'Pacific'], [586, 262, 'Ocean'],
];
const landLabels: [number, number, string, number][] = [
  [214, 61, 'NORTH', 0.55], [214, 73, 'AMERICA', 0.55],
  [726, 61, 'NORTH', 0.55], [726, 73, 'AMERICA', 0.55],
  [276, 159, 'SOUTH', 0.5], [276, 171, 'AMERICA', 0.5],
  [390, 61, 'EUROPE', 0.25], [391, 132, 'AFRICA', 0.25], [490, 76, 'ASIA', 0.3],
  [35, 187, 'AUSTRALIA', 0.4], [547, 187, 'AUSTRALIA', 0.4],
];

const WorldMap = () => {
  const shifts = [-WORLD, 0, WORLD];
  const land = countries.map(([, pts]) => outline(pts)).join('') + polar + peninsula;
  return (
    <svg className="world" viewBox="0 0 713 290" role="img" aria-label="World map of cereal production">
      <defs>
        <filter id="soft" x="-10%" y="-10%" width="120%" height="120%">
          <feGaussianBlur stdDeviation="2.5" />
        </filter>
        <filter id="haze" x="-20%" y="-20%" width="140%" height="140%">
          <feGaussianBlur stdDeviation="9" />
        </filter>
        <filter id="rough" x="0" y="0" width="713" height="290" filterUnits="userSpaceOnUse">
          <feTurbulence type="fractalNoise" baseFrequency="0.22" numOctaves="2" seed="4" result="n" />
          <feDisplacementMap in="SourceGraphic" in2="n" scale="4" xChannelSelector="R" yChannelSelector="G" />
        </filter>
        <filter id="relief" x="0" y="0" width="713" height="290" filterUnits="userSpaceOnUse">
          <feTurbulence type="fractalNoise" baseFrequency="0.025 0.035" numOctaves="4" seed="11" />
          <feColorMatrix values="0 0 0 0 1  0 0 0 0 1  0 0 0 0 1  3 0 0 0 -1.4" />
        </filter>
        <g id="shelf">
          <path d={land} fill="#d0eefb" stroke="#d0eefb" strokeWidth="6" strokeLinejoin="round" />
        </g>
        <g id="land" strokeLinejoin="round">
          <g stroke="#434b50" strokeWidth="0.9">
            {countries.map(([fill, pts], i) => (
              <path key={i} d={outline(pts)} fill={fill} />
            ))}
            <path d={polar} fill="#fff" />
            <path d={peninsula} fill="#fff" />
          </g>
          <g fill="#46505a">
            {islets.map(([lon, lat], i) => (
              <ellipse key={i} cx={px(lon)} cy={py(lat)} rx="1.3" ry="0.9" />
            ))}
          </g>
        </g>
        <g id="seafloor" fill="none" strokeLinecap="round">
          <g filter="url(#haze)">
            <path d="M70 95L140 70L185 105L190 170L110 160Z" fill="#84cff1" />
            <path d="M95 200L180 190L215 240L120 250Z" fill="#8bd0f2" />
            <path d="M270 85L320 70L315 130L290 150Z" fill="#80cbf0" />
            <path d="M300 190L345 190L340 250L290 230Z" fill="#86cff2" />
            <path d="M450 190L520 190L520 235L430 235Z" fill="#88cff2" />
          </g>
          <g filter="url(#soft)" stroke="#a9def6" strokeWidth="3">
            <path d="M310 55L296 85L305 120L330 145L342 190L345 235L400 248" />
            <path d="M425 130L455 150L465 190L440 225L400 248" />
            <path d="M465 190L500 230L560 240" />
            <path d="M202 175L203 210L188 228L160 240L130 262" />
            <path d="M98 160L112 185L104 215" stroke="#d6f0fb" />
            <path d="M130 162L165 175M90 90L120 130" />
            <path d="M272 240L310 236L320 250L300 258L272 262" stroke="#c5e9f8" />
          </g>
        </g>
      </defs>
      <rect width="713" height="290" fill="#92d6f5" />
      {shifts.map(s => (
        <use key={s} href="#seafloor" x={s} />
      ))}
      <rect width="713" height="290" filter="url(#relief)" opacity="0.22" />
      <g fill="#d9f2fb" filter="url(#soft)">
        <path d="M0 0H713V6L640 20L590 8L300 5L200 12L135 40L120 20L0 8Z" />
        <path d="M105 25L150 20L140 50L118 61L98 56L80 48L95 35Z" />
        <path d="M617 25L662 20L652 50L630 61L610 56L592 48L607 35Z" />
        <path d="M40 45L80 35L66 65L48 82L42 60Z" />
        <path d="M552 45L592 35L578 65L560 82L554 60Z" />
        <path d="M220 25L246 25L244 62L228 52Z" />
        <path d="M500 135L560 140L590 150L560 165L510 155Z" />
      </g>
      <g fill="#8ed6f4" filter="url(#soft)">
        <path d="M82 42L98 32L116 52L106 61L90 57Z" />
        <path d="M594 42L610 32L628 52L618 61L602 57Z" />
      </g>
      {shifts.map(s => (
        <use key={s} href="#shelf" x={s} filter="url(#soft)" />
      ))}
      <g filter="url(#rough)">
        {shifts.map(s => (
          <use key={s} href="#land" x={s} />
        ))}
      </g>
      <g fontFamily="Liberation Sans, sans-serif" letterSpacing="1" textAnchor="middle">
        <g fontSize="11" fontStyle="italic" fill="#42708f" opacity="0.75">
          {seaLabels.map(([x, y, t], i) => (
            <text key={i} x={x} y={y}>{t}</text>
          ))}
        </g>
        <g fontSize="10" fill="#2d5c85">
          {landLabels.map(([x, y, t, o], i) => (
            <text key={i} x={x} y={y} opacity={o}>{t}</text>
          ))}
        </g>
      </g>
    </svg>
  );
};

/* ---------- icons ---------- */

const Emblem = () => (
  <svg width="34" height="34" viewBox="0 0 34 34" fill="none" stroke="#fff" aria-hidden="true">
    <circle cx="17" cy="17" r="16" strokeWidth="1.6" />
    <path d="M17 31V13M17 26C13 24 11 19 9.500 9M17 26C21 24 23 19 24.500 9M17 21C14.500 18 13 13 12.500 6M17 21C19.500 18 21 13 21.500 6" strokeWidth="1" />
    <path d="M14 12.500L17 15.500L20 12.500M13.500 15.500L17 18.500L20.500 15.500M13.500 18.500L17 21.500L20.500 18.500M14 22L17 24.500L20 22M10.500 13L13.500 16.500M23.500 13L20.500 16.500M12 18.500L14.500 21.500M22 18.500L19.500 21.500" strokeWidth="1.700" />
    <path d="M5.500 22.500A13 13 0 0 0 14 29.300M28.500 22.500A13 13 0 0 1 20 29.300" strokeWidth="2.400" strokeDasharray="1.200 1.200" opacity=".7" />
    <g fill="#fff" stroke="none" fontFamily="Liberation Sans, sans-serif" fontWeight="700" fontSize="8" textAnchor="middle">
      <text x="6.500" y="17">F</text>
      <text x="17" y="9.500">A</text>
      <text x="27.300" y="17">O</text>
    </g>
  </svg>
);
const Magnifier = () => (
  <svg width="13" height="13" viewBox="0 0 13 13" fill="none" stroke="#555" aria-hidden="true">
    <circle cx="5" cy="5" r="4" strokeWidth="1.900" />
    <path d="M8 8L12.200 12.200" strokeWidth="2.600" />
  </svg>
);
const Caret = ({ down }: { down?: boolean }) => (
  <svg width={down ? 9 : 5} height={down ? 5 : 9} fill="currentColor" aria-hidden="true">
    <path d={down ? 'M0 0H9L4.500 5Z' : 'M0 0L5 4.500L0 9Z'} />
  </svg>
);
const Share = () => (
  <svg width="16" height="14" viewBox="0 0 16 14" aria-hidden="true">
    <path d="M6 2H2.500Q1 2 1 3.500V11.500Q1 13 2.500 13H9.500Q11 13 11 11.500V9.500" fill="none" stroke="#707070" strokeWidth="1.400" />
    <path d="M10 0L16 4.800L10 9.600V7C7 7 5 7.500 3.500 10C3.500 5.500 6 2.900 10 2.800Z" fill="#555" />
  </svg>
);
const Bubbles = () => (
  <svg width="15" height="15" viewBox="0 0 15 15" aria-hidden="true">
    <circle cx="3" cy="3.500" r="3" fill="#555" />
    <circle cx="11" cy="3.500" r="3" fill="#aaa" />
    <circle cx="3" cy="11.500" r="3" fill="#ddd" />
    <circle cx="11" cy="11.500" r="3" fill="#888" />
  </svg>
);
const Blocks = () => (
  <svg width="15" height="15" viewBox="0 0 15 15" aria-hidden="true">
    <rect x="0" y="0" width="7" height="6" fill="#555" />
    <rect x="8" y="0" width="6" height="6" fill="#aaa" />
    <rect x="0" y="8" width="7" height="6" fill="#ddd" />
    <rect x="8" y="8" width="6" height="6" fill="#888" />
  </svg>
);

/* ---------- data ---------- */

const menu = ['HOME', 'BROWSE DATA', 'DOWNLOAD DATA', 'COMPARE DATA', 'SEARCH DATA', 'ANALYSIS', 'METHODS & STANDARDS'];
const productionItems = ['Crops', 'Crops processed', 'Live Animals', 'Livestock Primary', 'Livestock Processed', 'Production Indices'];
const domains = [
  'Food Security', 'Production', 'Trade', 'Food Balance', 'Prices', 'Inputs', 'Population', 'Investment', 'Macro-Statistics',
  'Agri-Environmental Indicators', 'Emissions - Agriculture', 'Emissions - Land Use', 'Forestry', 'ASTI R&D Indicators', 'Emergency Response',
];
const filters = [
  ['ITEM', 'Cereals,Total'],
  ['FROM YEAR', '1993'],
  ['TO YEAR', '2013'],
  ['AGGREGATION', 'Average'],
];
const legend = [
  ['#ffffff', '<= 2,325,643'],
  ['#dfe6f6', '12,288,071'],
  ['#9cc6dd', '33,039,229'],
  ['#68aad6', '50,258,905'],
  ['#2f82be', '76,770,980'],
  ['#07519c', '449,970,033'],
  ['#08306b', '>= 449,970,033'],
];

export default function App() {
  return (
    <>
      <GlobalStyle />
      <WindowEdge />
      <Page>
        <Header>
          <Brand href="#" aria-label="FAOSTAT">
            <Emblem />
            <BrandName><b>FAO</b>STAT</BrandName>
          </Brand>
          <Org>
            FOOD AND AGRICULTURE ORGANIZATION OF THE UNITED NATIONS
            <b>STATISTICS DIVISION</b>
          </Org>
          <Languages>
            <Language href="#" $current>ENGLISH</Language>|
            <Language href="#">FRANÇAIS</Language>|
            <Language href="#">ESPAÑOL</Language>
          </Languages>
        </Header>
        <MenuBar>
          <Menu>
            {menu.map(m => (
              <MenuLink key={m} href="#" $active={m === 'BROWSE DATA'}>{m}</MenuLink>
            ))}
          </Menu>
          <SearchBox>
            <Magnifier />
            <SearchInput placeholder="Search" aria-label="Search" />
          </SearchBox>
        </MenuBar>
        <SubHeader>
          <PageTitle>Browse Data</PageTitle>
          <ViewLink href="#" $active>BY DOMAIN</ViewLink>
          <Divider>|</Divider>
          <ViewLink href="#">BY COUNTRY / REGION</ViewLink>
          <Divider>|</Divider>
          <ViewLink href="#">RANKINGS</ViewLink>
        </SubHeader>
        <Columns>
          <Sidebar>
            <SectionTitle>FAOSTAT Domains</SectionTitle>
            <Tree>
              {domains.map(d => {
                const open = d === 'Production';
                return (
                  <React.Fragment key={d}>
                    <TreeRow>
                      <Toggle type="button" $open={open} aria-label={`Toggle ${d}`} aria-expanded={open}>
                        <Caret down={open} />
                      </Toggle>
                      <TreeLink href="#" $selected={open}>{d}</TreeLink>
                    </TreeRow>
                    {open &&
                      productionItems.map(c => (
                        <TreeRow key={c} $child>
                          <TreeLink href="#">{c}</TreeLink>
                        </TreeRow>
                      ))}
                  </React.Fragment>
                );
              })}
            </Tree>
          </Sidebar>
          <Main>
            <MainHead>
              <SectionTitle>Production</SectionTitle>
            </MainHead>
            <Filters>
              {filters.map(([name, value]) => (
                <Field key={name}>
                  {name}
                  <SelectFrame>
                    <Select defaultValue={value}>
                      <option>{value}</option>
                    </Select>
                    <SelectArrow><Caret down /></SelectArrow>
                  </SelectFrame>
                </Field>
              ))}
            </Filters>
            <Board>
              <Card>
                <CardHead>
                  <CardTitle>
                    Production quantities by country <Period>Average 1993 - 2013</Period>
                  </CardTitle>
                  <Tools>
                    <ToolButton type="button" aria-label="Bubble map"><Bubbles /></ToolButton>
                    <ToolButton type="button" aria-label="Area map"><Blocks /></ToolButton>
                    <ToolButton type="button" aria-label="Share"><Share /></ToolButton>
                  </Tools>
                </CardHead>
                <MapFrame>
                  <WorldMap />
                  <ZoomControl>
                    <ZoomButton type="button" aria-label="Zoom in">
                      <svg width="9" height="9"><path d="M4.500 0V9M0 4.500H9" stroke="currentColor" strokeWidth="2.600" /></svg>
                    </ZoomButton>
                    <ZoomButton type="button" aria-label="Zoom out" $off>
                      <svg width="8" height="3"><path d="M0 1.500H8" stroke="currentColor" strokeWidth="2" /></svg>
                    </ZoomButton>
                  </ZoomControl>
                  <ScaleBar>
                    <ScaleLine $w={68}>5000 km</ScaleLine>
                    <ScaleLine $w={66} $top>3000 mi</ScaleLine>
                  </ScaleBar>
                  <Legend>
                    <LegendTitle>tonnes</LegendTitle>
                    <ul>
                      {legend.map(([c, t]) => (
                        <LegendRow key={t}><Swatch $c={c} />{t}</LegendRow>
                      ))}
                    </ul>
                  </Legend>
                </MapFrame>
                <Disclaimer>
                  <p>The designations employed and the presentation of material in the maps do not imply the expression of any opinion whatsoever on the part of FAO concerning the legal or constitutional status of any country, territory or sea area, or concerning the delimitation of frontiers.</p>
                  <p>South Sudan declared its independence on July 9, 2011. Due to data availability, the assessment presented in the map for Sudan and South Sudan reflects the situation up to 2011 for the former Sudan.</p>
                </Disclaimer>
              </Card>
              <CardRow>
                <Card>
                  <CardHead>
                    <CardTitle>
                      Production growth rates by region <Period>2000 - 2013</Period>
                    </CardTitle>
                    <Tools>
                      <ToolButton type="button" aria-label="Share"><Share /></ToolButton>
                    </Tools>
                  </CardHead>
                  <ChartArea>
                    <span>4</span>
                    <GridLine />
                  </ChartArea>
                </Card>
                <Card $narrow>
                  <CardTitle>
                    Production growth rates by region <Period>2000 - 2013</Period>
                  </CardTitle>
                </Card>
              </CardRow>
            </Board>
          </Main>
        </Columns>
      </Page>
    </>
  );
}
